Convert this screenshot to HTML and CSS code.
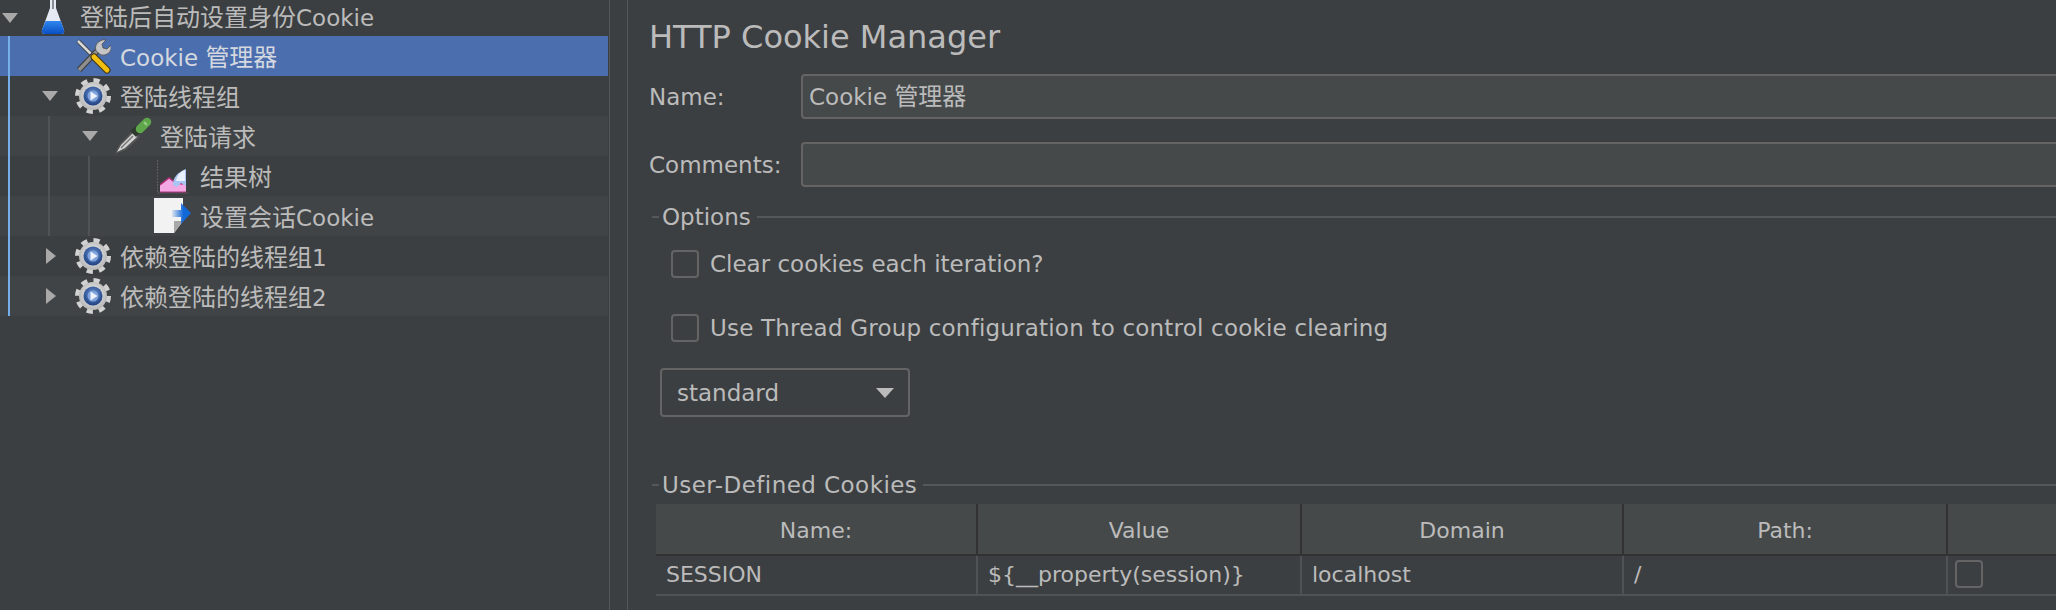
FILE: index.html
```html
<!DOCTYPE html>
<html lang="zh-CN">
<head>
  <meta charset="UTF-8">
  <title>HTTP Cookie Manager</title>
  <link rel="stylesheet" href="styles.css">
</head>
<body>
  <svg class="defs" width="0" height="0">
    <defs>
      <radialGradient id="gearFace" cx="50%" cy="45%" r="55%">
        <stop offset="0" stop-color="#fafafa"/>
        <stop offset="1" stop-color="#b4b4b4"/>
      </radialGradient>
      <radialGradient id="gearBlue" cx="50%" cy="40%" r="60%">
        <stop offset="0" stop-color="#6f97d8"/>
        <stop offset="1" stop-color="#1d3f80"/>
      </radialGradient>
      <linearGradient id="flaskBlue" x1="0" y1="0" x2="0" y2="1">
        <stop offset="0" stop-color="#2f86ee"/>
        <stop offset="1" stop-color="#0a4fc4"/>
      </linearGradient>
      <linearGradient id="arrowFade" x1="0" y1="0" x2="1" y2="0">
        <stop offset="0" stop-color="#1268d8" stop-opacity="0.1"/>
        <stop offset="0.6" stop-color="#1268d8"/>
      </linearGradient>
      <symbol id="gear" viewBox="0 0 36 38">
        <circle cx="18" cy="19" r="15.5" fill="none" stroke="#d2d2d2" stroke-width="5" stroke-dasharray="6.1 6.07"/>
        <circle cx="18" cy="19" r="14" fill="url(#gearFace)"/>
        <circle cx="18" cy="19" r="9.5" fill="url(#gearBlue)"/>
        <circle cx="18" cy="19" r="5.5" fill="#7ea3dc"/>
        <path d="M15.5 14.5l7 4.5-7 4.5z" fill="#eef3fb"/>
      </symbol>
    </defs>
  </svg>

  <div class="app">
    <nav class="tree">
      <div class="row row-top">
        <span class="twist"><svg width="20" height="12" viewBox="0 0 20 12"><path d="M2 1h16l-8 10z"/></svg></span>
        <span class="icon">
          <svg width="24" height="36" viewBox="0 0 24 36">
            <path d="M9 0h6v8l8 22q1 4-3 4H4q-4 0-3-4l8-22z" fill="#e4e9f3"/>
            <path d="M4.600 21H19.700L23 30q1 4-3 4H4q-4 0-3-4z" fill="url(#flaskBlue)"/>
            <path d="M11 0h2v9h-2z" fill="#8a8f96"/>
          </svg>
        </span>
        <span class="label"><span class="cjk">登陆后自动设置身份</span>Cookie</span>
      </div>

      <div class="tree-body">
        <div class="row row-selected">
          <span class="indent"></span>
          <span class="twist"></span>
          <span class="icon">
            <svg width="36" height="36" viewBox="0 0 36 36">
              <path d="M3 3L19 19" stroke="#3c3c3c" stroke-width="4.500"/>
              <path d="M3 3L19 19" stroke="#d8d8d8" stroke-width="2.500"/>
              <path d="M4 32L24 11" stroke="#3f3f3f" stroke-width="6"/>
              <path d="M4 32L24 11" stroke="#8e8e8e" stroke-width="3.500"/>
              <path d="M21 13q-2-7 4-10 3-2 6-1l-4 4 1 4 4 1 4-4q1 5-2 8-4 3-8 2z" fill="#c4c4c4" stroke="#4c4c4c" stroke-width="0.800"/>
              <path d="M19 19L32 32" stroke="#3f3510" stroke-width="7" stroke-linecap="round"/>
              <path d="M19 19L32 32" stroke="#f2bf10" stroke-width="5" stroke-linecap="round"/>
            </svg>
          </span>
          <span class="label">Cookie <span class="cjk">管理器</span></span>
        </div>

        <div class="row">
          <span class="indent"></span>
          <span class="twist"><svg width="20" height="12" viewBox="0 0 20 12"><path d="M2 1h16l-8 10z"/></svg></span>
          <span class="icon"><svg width="36" height="38"><use href="#gear"/></svg></span>
          <span class="label"><span class="cjk">登陆线程组</span></span>
        </div>

        <div class="row row-alt">
          <span class="indent"></span>
          <span class="indent guide"></span>
          <span class="twist"><svg width="20" height="12" viewBox="0 0 20 12"><path d="M2 1h16l-8 10z"/></svg></span>
          <span class="icon">
            <svg width="38" height="38" viewBox="0 0 38 38">
              <path d="M1 37L5 28 19 13l7 7-14 13z" fill="#555"/>
              <path d="M3 35L7 28 19 16l4 4-12 11z" fill="#d4d4d4"/>
              <path d="M7 31L19 19" stroke="#757575" stroke-width="1.500"/>
              <path d="M19 17L25 11" stroke="#2f3a2f" stroke-width="8"/>
              <path d="M26 12L33 5" stroke="#5da64a" stroke-width="8.500" stroke-linecap="round"/>
              <path d="M30 5L33 8" stroke="#9bd08c" stroke-width="2"/>
            </svg>
          </span>
          <span class="label"><span class="cjk">登陆请求</span></span>
        </div>

        <div class="row">
          <span class="indent"></span>
          <span class="indent guide"></span>
          <span class="indent guide"></span>
          <span class="twist"></span>
          <span class="icon">
            <svg width="32" height="36" viewBox="0 0 32 36">
              <path d="M0.500 2v33h31" fill="none" stroke="#5f5f5f" stroke-width="1" stroke-dasharray="2 1"/>
              <path d="M3 34V27l9-7 7 5 7-1 3-1v11z" fill="#f3a8e4"/>
              <path d="M3 27l9-7 7 5 7 1" fill="none" stroke="#b3327e" stroke-width="1.500"/>
              <path d="M3 34h26" stroke="#b3327e" stroke-width="1"/>
              <path d="M16 27q0-11 13-16v17l-5-3-4 4z" fill="#a9c5f3"/>
              <path d="M19 23q1-8 9-11v11z" fill="#eaf1fc"/>
            </svg>
          </span>
          <span class="label"><span class="cjk">结果树</span></span>
        </div>

        <div class="row row-alt">
          <span class="indent"></span>
          <span class="indent guide"></span>
          <span class="indent guide"></span>
          <span class="twist"></span>
          <span class="icon">
            <svg width="38" height="38" viewBox="0 0 38 38">
              <path d="M0 1h29v23l-9 12H0z" fill="#f2f2f2"/>
              <path d="M29 24l-9 12v-12z" fill="#a8a8a8"/>
              <path d="M18 13h9V6l10 10-10 11v-7h-9z" fill="url(#arrowFade)"/>
            </svg>
          </span>
          <span class="label"><span class="cjk">设置会话</span>Cookie</span>
        </div>

        <div class="row">
          <span class="indent"></span>
          <span class="twist twist-closed"><svg width="12" height="20" viewBox="0 0 12 20"><path d="M1 2l10 8-10 8z"/></svg></span>
          <span class="icon"><svg width="36" height="38"><use href="#gear"/></svg></span>
          <span class="label"><span class="cjk">依赖登陆的线程组</span>1</span>
        </div>

        <div class="row row-alt">
          <span class="indent"></span>
          <span class="twist twist-closed"><svg width="12" height="20" viewBox="0 0 12 20"><path d="M1 2l10 8-10 8z"/></svg></span>
          <span class="icon"><svg width="36" height="38"><use href="#gear"/></svg></span>
          <span class="label"><span class="cjk">依赖登陆的线程组</span>2</span>
        </div>
      </div>
    </nav>

    <div class="gutter"></div>

    <main class="panel">
      <h1 class="title">HTTP Cookie Manager</h1>

      <div class="field">
        <label class="field-label">Name:</label>
        <div class="text-input">Cookie <span class="cjk">管理器</span></div>
      </div>
      <div class="field field-second">
        <label class="field-label">Comments:</label>
        <div class="text-input"></div>
      </div>

      <div class="legend legend-options"><span>Options</span></div>

      <div class="check-row">
        <span class="checkbox"></span>
        <span>Clear cookies each iteration?</span>
      </div>
      <div class="check-row check-row-second">
        <span class="checkbox"></span>
        <span>Use Thread Group configuration to control cookie clearing</span>
      </div>

      <div class="select">
        <span>standard</span>
        <svg width="18" height="10" viewBox="0 0 18 10"><path d="M0 0h18l-9 10z"/></svg>
      </div>

      <div class="legend legend-cookies"><span>User-Defined Cookies</span></div>

      <div class="table">
        <div class="thead">
          <div class="col col-name">Name:</div>
          <div class="col col-value">Value</div>
          <div class="col col-domain">Domain</div>
          <div class="col col-path">Path:</div>
          <div class="col col-secure"></div>
        </div>
        <div class="tbody">
          <div class="col col-name">SESSION</div>
          <div class="col col-value">${__property(session)}</div>
          <div class="col col-domain">localhost</div>
          <div class="col col-path">/</div>
          <div class="col col-secure"><span class="checkbox"></span></div>
        </div>
      </div>
    </main>
  </div>
</body>
</html>
```

FILE: styles.css
```css
html, body {
  margin: 0;
  height: 100%;
  overflow: hidden;
}
body {
  background: #3c3f41;
  color: #bbbbbb;
  font-family: "DejaVu Sans", "Noto Sans CJK SC", sans-serif;
  font-size: 23px;
}
.defs {
  display: block;
  height: 0;
}
.cjk {
  font-size: 24px;
}
.app {
  display: flex;
  height: 610px;
}

/* left tree */
.tree {
  width: 608px;
  flex: none;
}
.tree-body {
  position: relative;
}
.tree-body::before {
  content: "";
  position: absolute;
  left: 8px;
  top: 0;
  bottom: 0;
  width: 2px;
  background: #75aee8;
  z-index: 2;
}
.row {
  display: flex;
  align-items: center;
  height: 40px;
}
.row-top {
  height: 36px;
}
.row-top .label {
  padding-bottom: 6px;
}
.row-alt {
  background: #414446;
}
.row-selected {
  background: #4b6eaf;
  color: #d4d8df;
}
.indent {
  width: 40px;
  height: 100%;
  flex: none;
}
.guide {
  background: linear-gradient(#505355, #505355) 8px 0 / 2px 100% no-repeat;
}
.twist {
  width: 33px;
  flex: none;
  display: flex;
  align-items: center;
}
.twist svg {
  fill: #a9a9a9;
}
.twist-closed {
  padding-left: 5px;
  width: 28px;
}
.icon {
  width: 40px;
  height: 38px;
  flex: none;
  display: flex;
  align-items: center;
  justify-content: center;
}
.label {
  margin-left: 7px;
  padding-bottom: 2px;
  white-space: nowrap;
}

/* divider */
.gutter {
  width: 19px;
  flex: none;
  box-sizing: border-box;
  border-left: 1px solid #55585a;
  border-right: 1px solid #55585a;
  margin-left: 1px;
}

/* right panel */
.panel {
  flex: 1;
  min-width: 0;
  padding-left: 21px;
}
.title {
  margin: 18px 0 0;
  height: 39px;
  line-height: 39px;
  font-size: 32px;
  font-weight: normal;
}
.field {
  display: flex;
  align-items: center;
  margin-top: 17px;
}
.field-second {
  margin-top: 23px;
}
.field-label {
  width: 152px;
  flex: none;
}
.text-input {
  flex: 1;
  height: 45px;
  line-height: 43px;
  margin-right: -10px;
  padding-left: 6px;
  box-sizing: border-box;
  background: #45494a;
  border: 2px solid #646464;
  border-radius: 4px;
}
.legend {
  display: flex;
  align-items: center;
  margin-left: 3px;
  line-height: 28px;
}
.legend::before {
  content: "";
  width: 7px;
  height: 2px;
  margin-right: 3px;
  background: #55585a;
}
.legend::after {
  content: "";
  flex: 1;
  height: 2px;
  margin-left: 6px;
  background: #55585a;
}
.legend-options {
  margin-top: 16px;
}
.legend-cookies {
  margin-top: 54px;
  letter-spacing: 0.45px;
}
.check-row {
  display: flex;
  align-items: center;
  gap: 11px;
  margin: 19px 0 0 22px;
  height: 28px;
}
.check-row-second {
  margin-top: 36px;
  letter-spacing: 0.2px;
}
.checkbox {
  display: block;
  width: 28px;
  height: 28px;
  flex: none;
  box-sizing: border-box;
  border: 2px solid #646464;
  border-radius: 4px;
}
.select {
  display: flex;
  align-items: center;
  justify-content: space-between;
  width: 250px;
  height: 49px;
  margin: 26px 0 0 11px;
  padding: 0 14px 0 15px;
  box-sizing: border-box;
  border: 2px solid #646464;
  border-radius: 4px;
}
.select svg {
  fill: #bbbbbb;
}

/* cookies table */
.table {
  margin: 5px 0 0 7px;
  font-size: 22px;
}
.thead, .tbody {
  display: flex;
}
.thead {
  height: 52px;
  box-sizing: border-box;
  background: #45494a;
  border-bottom: 2px solid #323232;
  text-align: center;
}
.thead .col {
  line-height: 53px;
  border-right: 2px solid #323232;
}
.tbody {
  height: 40px;
  box-sizing: border-box;
  border-bottom: 2px solid #505355;
}
.tbody .col {
  line-height: 38px;
  padding-left: 10px;
  border-right: 2px solid #505355;
}
.col {
  box-sizing: border-box;
  flex: none;
  height: 100%;
}
.col-name {
  width: 322px;
}
.col-value {
  width: 324px;
}
.col-domain {
  width: 322px;
}
.col-path {
  width: 324px;
}
.col-secure {
  width: 200px;
  border-right: none !important;
}
.tbody .col-secure {
  padding: 4px 0 0 7px;
}
```
